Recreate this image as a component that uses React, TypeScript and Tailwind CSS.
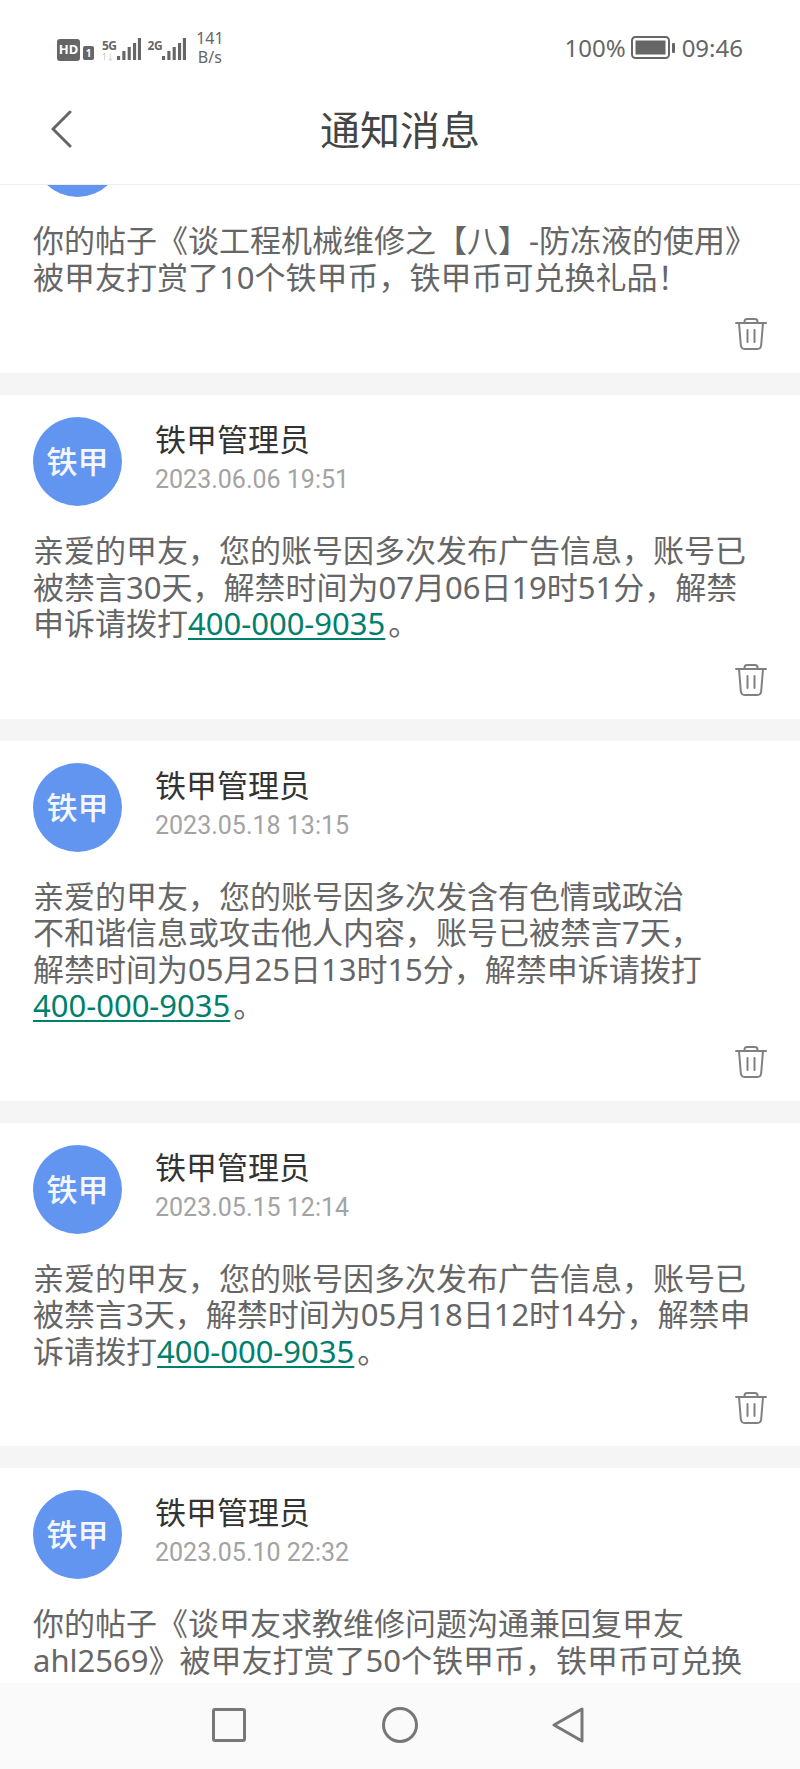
const cjk = "font-['Noto_Sans','Noto_Sans_CJK_SC',sans-serif]";

type Notice = {
	date: string;
	lines: React.ReactNode[];
};

const Phone = () => (
	<a className="mr-[3px] text-[#00806c] underline decoration-2 underline-offset-[3px]">400-000-9035</a>
);

const notices: Notice[] = [
	{
		date: "2023.06.06 19:51",
		lines: [
			"亲爱的甲友，您的账号因多次发布广告信息，账号已",
			"被禁言30天，解禁时间为07月06日19时51分，解禁",
			<>申诉请拨打<Phone />。</>,
		],
	},
	{
		date: "2023.05.18 13:15",
		lines: [
			"亲爱的甲友，您的账号因多次发含有色情或政治",
			"不和谐信息或攻击他人内容，账号已被禁言7天，",
			"解禁时间为05月25日13时15分，解禁申诉请拨打",
			<><Phone />。</>,
		],
	},
	{
		date: "2023.05.15 12:14",
		lines: [
			"亲爱的甲友，您的账号因多次发布广告信息，账号已",
			"被禁言3天，解禁时间为05月18日12时14分，解禁申",
			<>诉请拨打<Phone />。</>,
		],
	},
	{
		date: "2023.05.10 22:32",
		lines: [
			"你的帖子《谈甲友求教维修问题沟通兼回复甲友",
			"ahl2569》被甲友打赏了50个铁甲币，铁甲币可兑换",
		],
	},
];

function Signal() {
	return (
		<svg width="24" height="24" viewBox="0 0 27 24" preserveAspectRatio="none" fill="#666">
			<rect x="0" y="18" width="3.5" height="4" />
			<rect x="6" y="13" width="3.5" height="9" />
			<rect x="12" y="9" width="3.5" height="13" />
			<rect x="18" y="5" width="3.5" height="17" />
			<rect x="23.5" y="0" width="3.5" height="22" />
		</svg>
	);
}

function TrashIcon() {
	return (
		<svg width="32" height="32" viewBox="0 0 32 32" fill="none" stroke="#808080" strokeWidth="2" strokeLinecap="round" strokeLinejoin="round">
			<path d="M1 5h30" />
			<path d="M9.500 5V3.500Q9.500 1 12 1h8q2.500 0 2.500 2.500V5" />
			<path d="M4 5l1.800 22q.3 4 4 4h12.400q3.700 0 4-4L28 5" />
			<path d="M12.500 12v12M19.500 12v12" />
		</svg>
	);
}

function Avatar() {
	return (
		<div className="flex h-[89px] w-[89px] shrink-0 items-center justify-center rounded-full bg-[#6195ef]">
			<span className="text-[31px] leading-none font-medium text-[#f4f7fd]">铁甲</span>
		</div>
	);
}

function NoticeCard({ date, lines }: Notice) {
	return (
		<div className="mb-[22px] bg-white pt-[22px]">
			<div className="flex pl-[33px]">
				<Avatar />
				<div className="pl-[33px]">
					<div className="pt-[2px] text-[31px] leading-[40px] text-[#333]">铁甲管理员</div>
					<div className="pt-[4px] font-['Roboto'] text-[25px] leading-[34px] text-[#a3a3a3]">{date}</div>
				</div>
			</div>
			<div className="mt-[26px] pl-[33px] text-[31px] leading-[36.5px] whitespace-nowrap text-[#666]">
				{lines.map((line, i) => (
					<div key={i}>{line}</div>
				))}
			</div>
			<div className="flex h-[77px] items-center justify-end pr-[33px]">
				<TrashIcon />
			</div>
		</div>
	);
}

export default function App() {
	return (
		<div className={`flex h-[1769px] w-[800px] flex-col overflow-hidden bg-[#f5f5f5] ${cjk}`}>
			{/* status bar */}
			<div className="flex h-[94px] shrink-0 items-start justify-between bg-white pt-[32px] pl-[57px] pr-[57px]">
				<div className="flex items-center">
					<div className="flex h-[22px] w-[23px] items-center justify-center rounded-[3px] bg-[#666] text-[13px] leading-none font-bold text-white">HD</div>
					<div className="ml-[3px] mt-[6px] flex h-[14px] w-[11px] items-center justify-center rounded-[2px] bg-[#666] text-[10px] leading-none font-bold text-white">1</div>
					<div className="ml-[8px] flex items-end">
						<div className="flex flex-col">
							<span className="text-[12px] leading-[12px] font-bold tracking-[-0.5px] text-[#666]">5G</span>
							<span className="text-[8px] leading-[10px] text-[#c4c4c4]">1↓</span>
						</div>
						<Signal />
					</div>
					<div className="ml-[7px] flex items-end">
						<span className="mb-[10px] text-[12px] leading-[12px] font-bold tracking-[-0.5px] text-[#666]">2G</span>
						<Signal />
					</div>
					<div className="ml-[10px] -mt-[3px] flex flex-col items-center text-[16px] leading-[19px] text-[#666]">
						<span>141</span>
						<span>B/s</span>
					</div>
				</div>
				<div className="flex items-center pt-[1px] text-[24px] leading-[30px] text-[#666]">
					<span>100%</span>
					<svg width="44" height="24" viewBox="0 0 44 24" fill="none" className="ml-[5px]">
						<rect x="1" y="1" width="37" height="21" rx="3.500" stroke="#666" strokeWidth="2" />
						<rect x="4.500" y="4.500" width="30" height="14" fill="#666" />
						<rect x="41" y="7" width="3" height="10" rx="1" fill="#666" />
					</svg>
					<span className="ml-[7px]">09:46</span>
				</div>
			</div>

			{/* header */}
			<div className="relative z-10 flex h-[91px] shrink-0 items-center justify-center border-b border-[#eeeeee] bg-white pb-[18px]">
				<svg width="22" height="38" viewBox="0 0 22 38" fill="none" stroke="#666" strokeWidth="3" strokeLinecap="round" strokeLinejoin="round" className="absolute top-[16px] left-[51px]">
					<path d="M19 2L2 19l17 17" />
				</svg>
				<h1 className="text-[40px] leading-none font-normal text-[#444]">通知消息</h1>
			</div>

			{/* list, scrolled so the first card is cut by the header */}
			<div className="min-h-0 flex-1 overflow-hidden">
				<div className="-mt-[99px]">
					<div className="mb-[22px] bg-white pt-[22px]">
						<div className="flex pl-[33px]">
							<Avatar />
						</div>
						<div className="mt-[25px] pl-[33px] text-[31px] leading-[36.5px] whitespace-nowrap text-[#666]">
							<div>你的帖子《谈工程机械维修之【八】-防冻液的使用》</div>
							<div>被甲友打赏了10个铁甲币，铁甲币可兑换礼品！</div>
						</div>
						<div className="flex h-[78px] items-center justify-end pr-[33px]">
							<TrashIcon />
						</div>
					</div>
					{notices.map((n) => (
						<NoticeCard key={n.date} {...n} />
					))}
				</div>
			</div>

			{/* nav bar */}
			<div className="flex h-[86px] shrink-0 items-center bg-[#fafafa] pl-[212px] pb-[2px]">
				<svg width="34" height="34" viewBox="0 0 34 34" fill="none" stroke="#777" strokeWidth="3">
					<rect x="1.500" y="1.500" width="31" height="31" rx="1.500" />
				</svg>
				<svg width="36" height="36" viewBox="0 0 36 36" fill="none" stroke="#777" strokeWidth="3" className="ml-[136px]">
					<circle cx="18" cy="18" r="16.500" />
				</svg>
				<svg width="32" height="36" viewBox="0 0 32 36" fill="none" stroke="#777" strokeWidth="3" strokeLinejoin="round" className="ml-[134px]">
					<path d="M30 2v32L2 18z" />
				</svg>
			</div>
		</div>
	);
}
